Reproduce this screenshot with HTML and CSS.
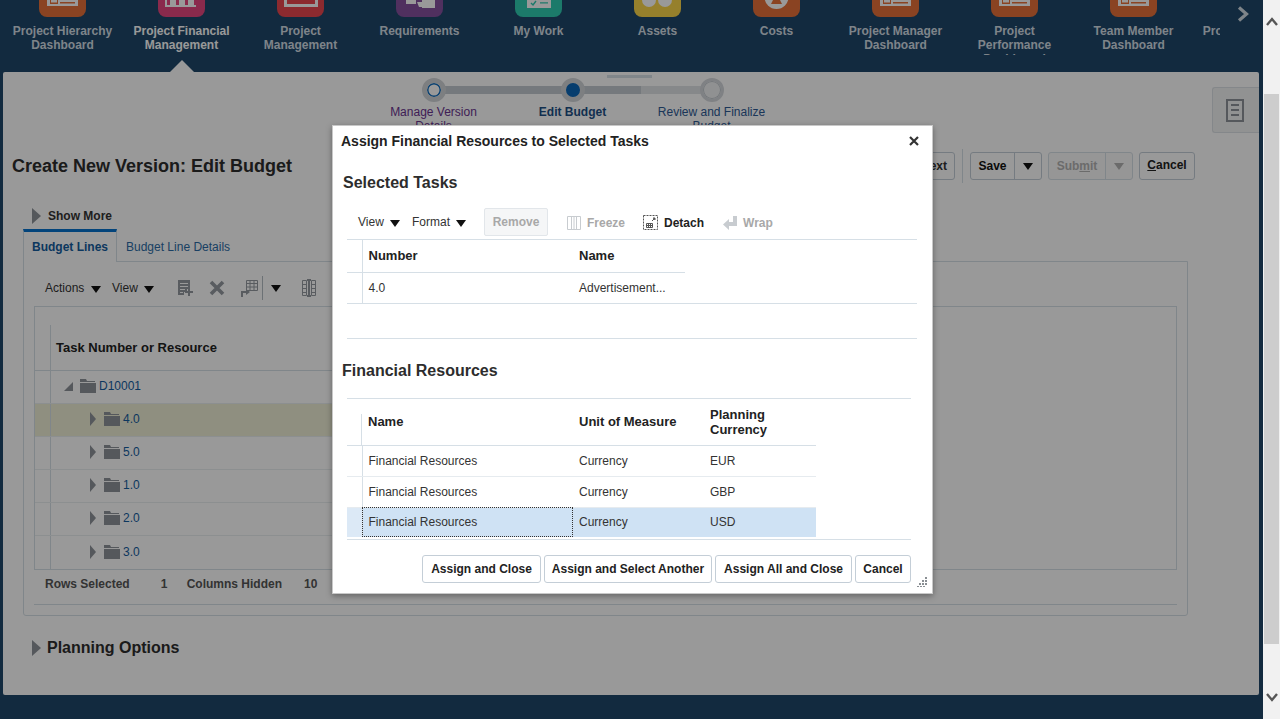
FILE: index.html
```html
<!DOCTYPE html>
<html lang="en">
<head>
    <meta charset="UTF-8">
    <title>Create New Version: Edit Budget</title>
    <link rel="stylesheet" href="styles.css">
</head>
<body>
    <svg class="defs" width="0" height="0">
        <symbol id="folder" viewBox="0 0 16 14">
            <path d="M0 2V0h6l1 2h8v1H0zM0 4h16v10H0z"/>
        </symbol>
        <symbol id="card" viewBox="0 0 47 17">
            <path fill="#fff" d="M8 0h31v6H8z"/>
            <path fill="#e67139" d="M11 0h8v4h-8zM21 2h15v1.5H21z"/>
            <path fill="#fff" d="M12 0h6v2.5h-6z"/>
        </symbol>
    </svg>

    <div class="viewport">
        <header class="app-header">
            <nav class="strip">
                <a class="strip-item">
                    <svg class="tile orange" viewBox="0 0 47 17"><use href="#card"/></svg>
                    <span class="strip-label">Project Hierarchy Dashboard</span>
                </a>
                <a class="strip-item active">
                    <svg class="tile crimson" viewBox="0 0 47 17"><path fill="#fff" d="M7 0h2v5h3V0h6v5h3V0h6v5h3V0h6v5h2v2H7z"/></svg>
                    <span class="strip-label">Project Financial Management</span>
                </a>
                <a class="strip-item">
                    <svg class="tile red" viewBox="0 0 47 17"><path fill="#fff" d="M7 0h34v7H7z"/><path fill="#e9464f" d="M10 0h28v4H10z"/></svg>
                    <span class="strip-label">Project Management</span>
                </a>
                <a class="strip-item">
                    <svg class="tile purple" viewBox="0 0 47 17"><path fill="#fff" d="M10 0h10v4H10zM26 0h13v8H26zM21 2h5v5h-3z"/></svg>
                    <span class="strip-label">Requirements</span>
                </a>
                <a class="strip-item">
                    <svg class="tile teal" viewBox="0 0 47 17">
                        <path fill="#fff" d="M12 0h24v8H12z"/>
                        <path fill="none" stroke="#30cbb1" stroke-width="1.4" d="M16 3l2 2 3-4"/>
                        <path fill="#30cbb1" d="M25 2.2h8v1.4h-8z"/>
                    </svg>
                    <span class="strip-label">My Work</span>
                </a>
                <a class="strip-item">
                    <svg class="tile yellow" viewBox="0 0 47 17"><circle fill="#fff" cx="15" cy="0" r="7"/><circle fill="#fff" cx="31" cy="0" r="7"/></svg>
                    <span class="strip-label">Assets</span>
                </a>
                <a class="strip-item">
                    <svg class="tile orange" viewBox="0 0 47 17"><circle fill="#fff" cx="23.5" cy="-3" r="12"/><path fill="#e67139" d="M20 0h7l2 4h-11z"/></svg>
                    <span class="strip-label">Costs</span>
                </a>
                <a class="strip-item">
                    <svg class="tile orange" viewBox="0 0 47 17"><use href="#card"/></svg>
                    <span class="strip-label">Project Manager Dashboard</span>
                </a>
                <a class="strip-item">
                    <svg class="tile orange" viewBox="0 0 47 17"><use href="#card"/></svg>
                    <span class="strip-label">Project Performance Dashboard</span>
                </a>
                <a class="strip-item">
                    <svg class="tile orange" viewBox="0 0 47 17"><use href="#card"/></svg>
                    <span class="strip-label">Team Member Dashboard</span>
                </a>
                <a class="strip-item">
                    <svg class="tile orange" viewBox="0 0 47 17"><use href="#card"/></svg>
                    <span class="strip-label">Project Hierarchy</span>
                </a>
            </nav>
            <svg class="strip-next" width="14" height="16" viewBox="0 0 14 16"><path d="M2 1.5L9.5 8 2 14.5" fill="none" stroke="#d3dde5" stroke-width="3.2"/></svg>
        </header>

        <main class="panel">
            <div class="splitter"></div>

            <div class="train">
                <div class="train-line"></div>
                <div class="stop visited">
                    <span class="stop-dot"></span>
                    <span class="stop-label">Manage Version Details</span>
                </div>
                <div class="stop current">
                    <span class="stop-dot"></span>
                    <span class="stop-label">Edit Budget</span>
                </div>
                <div class="stop">
                    <span class="stop-dot"></span>
                    <span class="stop-label">Review and Finalize Budget</span>
                </div>
            </div>

            <div class="side-tab">
                <svg width="18" height="23" viewBox="0 0 18 23"><path fill="none" stroke="#8e9399" stroke-width="2" d="M1 1h16v21H1zM5 6h8M5 11h8M5 16h8"/></svg>
            </div>

            <div class="title-row">
                <h1 class="page-title">Create New Version: Edit Budget</h1>
                <div class="page-actions">
                    <button class="btn">Next</button>
                    <span class="actions-sep"></span>
                    <div class="split-btn">
                        <span class="split-main">Save</span>
                        <span class="split-drop"><i class="caret black"></i></span>
                    </div>
                    <div class="split-btn disabled">
                        <span class="split-main">Sub<u>m</u>it</span>
                        <span class="split-drop"><i class="caret grey"></i></span>
                    </div>
                    <button class="btn cancel"><u>C</u>ancel</button>
                </div>
            </div>

            <div class="show-more">
                <i class="disclose"></i>
                <span>Show More</span>
            </div>

            <div class="tabs">
                <span class="tab selected">Budget Lines</span>
                <span class="tab">Budget Line Details</span>
            </div>

            <section class="tab-box">
                <div class="grid-toolbar">
                    <span class="menu actions">Actions <i class="caret black"></i></span>
                    <span class="menu">View <i class="caret black"></i></span>
                    <svg class="tool first" width="15" height="16" viewBox="0 0 15 16">
                        <path fill="#949aa0" d="M0 0h12v9H9v3H6v3H0z"/>
                        <path stroke="#fff" d="M2 3.5h8M2 6.5h8M2 9.5h5M2 12.5h3"/>
                        <path fill="#949aa0" d="M10 8h2v3h3v2h-3v3h-2v-3H7v-2h3z"/>
                    </svg>
                    <svg class="tool" width="16" height="16" viewBox="0 0 16 16"><path stroke="#949aa0" stroke-width="3.6" d="M2 2l12 12M14 2L2 14"/></svg>
                    <svg class="tool" width="17" height="17" viewBox="0 0 17 17">
                        <path fill="none" stroke="#949aa0" d="M5.5.5h11v10h-11zM5.5 3.5h11M5.5 7h11M9 .5v10M13 .5v10"/>
                        <path fill="none" stroke="#949aa0" stroke-width="2" d="M1 17v-5h5"/>
                        <path fill="#949aa0" d="M5 9l4 3-4 3z"/>
                    </svg>
                    <span class="tool-sep"></span>
                    <i class="caret black tool-caret"></i>
                    <svg class="tool last" width="16" height="18" viewBox="0 0 16 18">
                        <path fill="none" stroke="#949aa0" d="M1.500 1.500h4v15h-4zM10.500 1.500h4v15h-4zM1.500 5.500h4M1.500 9.500h4M1.500 13.500h4M10.500 5.500h4M10.500 9.500h4M10.500 13.500h4"/>
                        <path fill="#949aa0" d="M6 0h4v2H9v14h1v2H6v-2h1V2H6z"/>
                    </svg>
                </div>

                <div class="tree">
                    <div class="tree-head">
                        <span class="tree-sel"></span>
                        <span class="tree-col">Task Number or Resource</span>
                    </div>
                    <div class="tree-row">
                        <span class="tree-sel"></span>
                        <i class="twist open"></i>
                        <svg class="folder" width="16" height="14"><use href="#folder"/></svg>
                        <a class="node">D10001</a>
                    </div>
                    <div class="tree-row child hilite">
                        <span class="tree-sel"></span>
                        <i class="twist"></i>
                        <svg class="folder" width="16" height="14"><use href="#folder"/></svg>
                        <a class="node">4.0</a>
                    </div>
                    <div class="tree-row child">
                        <span class="tree-sel"></span>
                        <i class="twist"></i>
                        <svg class="folder" width="16" height="14"><use href="#folder"/></svg>
                        <a class="node">5.0</a>
                    </div>
                    <div class="tree-row child">
                        <span class="tree-sel"></span>
                        <i class="twist"></i>
                        <svg class="folder" width="16" height="14"><use href="#folder"/></svg>
                        <a class="node">1.0</a>
                    </div>
                    <div class="tree-row child">
                        <span class="tree-sel"></span>
                        <i class="twist"></i>
                        <svg class="folder" width="16" height="14"><use href="#folder"/></svg>
                        <a class="node">2.0</a>
                    </div>
                    <div class="tree-row child last-row">
                        <span class="tree-sel"></span>
                        <i class="twist"></i>
                        <svg class="folder" width="16" height="14"><use href="#folder"/></svg>
                        <a class="node">3.0</a>
                    </div>
                </div>

                <div class="status-bar">
                    <b class="status-name">Rows Selected</b>
                    <b class="status-num">1</b>
                    <b class="status-name">Columns Hidden</b>
                    <b class="status-num wide">10</b>
                </div>
                <div class="status-rule"></div>
            </section>

            <div class="planning">
                <i class="disclose"></i>
                <span>Planning Options</span>
            </div>
        </main>

        <div class="overlay"></div>

        <div class="modal">
            <div class="modal-head">
                <span class="modal-title">Assign Financial Resources to Selected Tasks</span>
                <svg width="10" height="10" viewBox="0 0 10 10"><path stroke="#333" stroke-width="2.200" d="M1 1l8 8M9 1L1 9"/></svg>
            </div>

            <h2 class="section-title">Selected Tasks</h2>
            <div class="modal-toolbar">
                <span class="menu view">View <i class="caret black"></i></span>
                <span class="menu format">Format <i class="caret black"></i></span>
                <button class="btn-remove" disabled>Remove</button>
                <span class="tool-text off">
                    <svg width="14" height="14" viewBox="0 0 14 14"><path fill="none" stroke="#c8ccd0" d="M.5.5h13v13H.5zM4.500.5v13M7 .5v13M9.500.5v13"/></svg>
                    Freeze
                </span>
                <span class="tool-text">
                    <svg width="15" height="15" viewBox="0 0 15 15">
                        <path fill="none" stroke="#555" stroke-dasharray="2 1" d="M.5.5h14v14H.5z"/>
                        <path fill="none" stroke="#555" d="M3.500 8.500h6v4h-6zM5.500 8.500v4M7.500 8.500v4M3.500 10.500h6"/>
                        <path stroke="#555" d="M9 6l3-3M10 3h2v2"/>
                    </svg>
                    Detach
                </span>
                <span class="tool-text off wrap">
                    <svg width="14" height="14" viewBox="0 0 14 14"><path fill="#c8ccd0" d="M10 0h4v10H6v4L0 8.500 6 3v3h4z"/></svg>
                    Wrap
                </span>
            </div>

            <div class="task-wrap">
                <table class="data">
                    <tr>
                        <th class="sel"></th>
                        <th class="col-a">Number</th>
                        <th class="col-n">Name</th>
                    </tr>
                    <tr>
                        <td class="sel"></td>
                        <td>4.0</td>
                        <td>Advertisement...</td>
                    </tr>
                </table>
            </div>
            <div class="modal-rule"></div>

            <h2 class="section-title fin">Financial Resources</h2>
            <div class="fin-wrap">
                <table class="data">
                    <tr class="tall">
                        <th class="sel short"></th>
                        <th class="col-a">Name</th>
                        <th class="col-u">Unit of Measure</th>
                        <th class="col-n">Planning Currency</th>
                    </tr>
                    <tr>
                        <td class="sel"></td>
                        <td>Financial Resources</td>
                        <td>Currency</td>
                        <td>EUR</td>
                    </tr>
                    <tr>
                        <td class="sel"></td>
                        <td>Financial Resources</td>
                        <td>Currency</td>
                        <td>GBP</td>
                    </tr>
                    <tr class="picked">
                        <td class="sel"></td>
                        <td class="focus">Financial Resources</td>
                        <td>Currency</td>
                        <td>USD</td>
                    </tr>
                </table>
            </div>

            <div class="modal-foot">
                <button class="btn">Assign and Close</button>
                <button class="btn">Assign and Select Another</button>
                <button class="btn">Assign All and Close</button>
                <button class="btn">Cancel</button>
            </div>

            <svg class="grip" width="10" height="10" viewBox="0 0 10 10">
                <path fill="#8a8f94" d="M8 0h2v2H8zM5 3h2v2H5zM8 3h2v2H8zM2 6h2v2H2zM5 6h2v2H5zM8 6h2v2H8zM0 9h2v1H0zM3 9h2v1H3zM6 9h2v1H6z"/>
            </svg>
        </div>
    </div>

    <aside class="scrollbar">
        <svg class="scroll-up" width="12" height="9" viewBox="0 0 12 9"><path d="M1 8l5-6 5 6" fill="none" stroke="#555" stroke-width="2.400"/></svg>
        <div class="scroll-thumb"></div>
        <svg class="scroll-down" width="12" height="9" viewBox="0 0 12 9"><path d="M1 1l5 6 5-6" fill="none" stroke="#555" stroke-width="2.400"/></svg>
    </aside>
</body>
</html>
```

FILE: styles.css
```css
html {
    background-color: white;
}

body {
    display: flex;
    margin: 0;
    height: 719px;
    overflow: hidden;
    font-family: "Liberation Sans", Arial, sans-serif;
    font-size: 12px;
    color: #333;
}

.defs {
    position: absolute;
}

.viewport {
    position: relative;
    width: 1263px;
    background-color: #1e4769;
    overflow: hidden;
}

.overlay {
    position: absolute;
    inset: 0;
    background-color: rgba(0, 0, 0, 0.4);
}

/* top strip */
.app-header {
    display: flex;
    height: 72px;
    padding-left: 3px;
}

.strip {
    display: flex;
    width: 1217px;
    overflow: hidden;
    flex-shrink: 0;
}

.strip-item {
    position: relative;
    display: flex;
    flex-direction: column;
    align-items: center;
    flex: 0 0 119px;
    height: 72px;
}

.tile {
    display: block;
    width: 47px;
    height: 17px;
    flex-shrink: 0;
    border-radius: 0 0 8px 8px;
}

.orange { background-color: #e67139; }
.crimson { background-color: #e6467f; }
.red { background-color: #e9464f; }
.purple { background-color: #85509e; }
.teal { background-color: #30cbb1; }
.yellow { background-color: #fad54a; }

.strip-label {
    display: block;
    margin-top: 7px;
    padding: 0 8px;
    max-height: 31px;
    overflow: hidden;
    font-weight: bold;
    line-height: 14px;
    text-align: center;
    color: #d3dde5;
}

.strip-item.active .strip-label {
    color: white;
}

.strip-item.active::after {
    content: "";
    position: absolute;
    bottom: 0;
    left: 48px;
    border-left: 12px solid transparent;
    border-right: 12px solid transparent;
    border-bottom: 12px solid white;
}

.strip-next {
    margin: 6px 0 0 17px;
}

/* page panel */
.panel {
    position: relative;
    box-sizing: border-box;
    width: 1256px;
    height: 623px;
    margin-left: 3px;
    background-color: white;
    border-radius: 2px;
    overflow: hidden;
}

.splitter {
    width: 45px;
    height: 3px;
    margin: 3px 0 0 604px;
    background-color: #d6dfe6;
}

.train {
    position: relative;
    display: flex;
    width: 417px;
    height: 73px;
    margin-left: 361px;
}

.train-line {
    position: absolute;
    top: 8px;
    left: 69px;
    width: 278px;
    height: 8px;
    background: linear-gradient(to right, #c3cad0 75%, #dfe3e7 75%);
}

.stop {
    position: relative;
    display: flex;
    flex-direction: column;
    align-items: center;
    width: 139px;
    text-align: center;
}

.stop-dot {
    box-sizing: border-box;
    width: 24px;
    height: 24px;
    border: 3px solid #d4d8dc;
    border-radius: 50%;
    background-color: #f0f2f4;
    box-shadow: inset 0 0 0 1px #c0c6cc;
}

.visited .stop-dot {
    border: 5px solid #d0d4d8;
    background-color: white;
    box-shadow: inset 0 0 0 1.5px #0f6cbd;
}

.current .stop-dot {
    border: 5px solid #d0d4d8;
    background-color: #0a66b8;
    box-shadow: none;
}

.stop-label {
    width: 114px;
    margin-top: 3px;
    line-height: 14px;
    color: #2d5a94;
}

.visited .stop-label {
    color: #6a3490;
}

.current .stop-label {
    font-weight: bold;
    color: #1d4f85;
}

.side-tab {
    position: absolute;
    top: 15px;
    right: 0;
    display: flex;
    align-items: center;
    justify-content: center;
    box-sizing: border-box;
    width: 47px;
    height: 46px;
    padding-right: 2px;
    background-color: #f2f3f4;
    border: 1px solid #dde2e6;
    border-right: none;
    border-radius: 3px 0 0 3px;
}

.title-row {
    display: flex;
    justify-content: space-between;
    align-items: center;
    height: 30px;
    padding: 0 64px 0 9px;
}

.page-title {
    margin: 0;
    font-size: 18px;
    color: #2d2d2d;
}

.page-actions {
    display: flex;
    align-items: center;
    gap: 6px;
}

.actions-sep {
    width: 1px;
    height: 34px;
    margin: 0 1px;
    background-color: #d6dfe6;
}

.btn {
    box-sizing: border-box;
    height: 28px;
    padding: 0 7px;
    background-color: white;
    border: 1px solid #c4ced7;
    border-radius: 3px;
    font: bold 12px "Liberation Sans", Arial, sans-serif;
    color: #333;
}

.btn.cancel {
    width: 56px;
    padding-bottom: 3px;
    color: #222;
}

.split-btn {
    display: flex;
    box-sizing: border-box;
    height: 28px;
    line-height: 26px;
    background-color: white;
    border: 1px solid #c4ced7;
    border-radius: 3px;
    font-weight: bold;
    color: #111;
}

.split-main {
    box-sizing: border-box;
    width: 44px;
    text-align: center;
    border-right: 1px solid #c4ced7;
}

.split-drop {
    display: flex;
    align-items: center;
    justify-content: center;
    width: 26px;
}

.split-btn.disabled {
    color: #b3b3b3;
    background-color: #fafafa;
    border-color: #d6dfe6;
}

.split-btn.disabled .split-main {
    width: 57px;
    border-color: #d6dfe6;
}

.caret {
    display: inline-block;
    border-left: 5px solid transparent;
    border-right: 5px solid transparent;
    border-top: 7px solid #222;
    vertical-align: -1px;
}

.caret.black {
    border-top-color: #111;
}

.caret.grey {
    border-top-color: #b3b3b3;
}

.show-more {
    display: flex;
    align-items: center;
    gap: 7px;
    height: 16px;
    margin: 27px 0 0 29px;
    font-weight: bold;
    color: #333;
}

.disclose {
    width: 0;
    height: 0;
    border-top: 8px solid transparent;
    border-bottom: 8px solid transparent;
    border-left: 9px solid #8e9399;
}

.tabs {
    display: flex;
    margin: 5px 0 0 20px;
    height: 33px;
}

.tab {
    position: relative;
    box-sizing: border-box;
    padding: 11px 9px 0 9px;
    height: 33px;
    color: #2c6ca6;
    white-space: nowrap;
}

.tab.selected {
    width: 94px;
    height: 33px;
    padding: 8px 0 0 8px;
    border-top: 3px solid #0572ce;
    border-left: 1px solid #d6dfe6;
    border-right: 1px solid #d6dfe6;
    background-color: white;
    font-weight: bold;
    color: #145c9e;
}

.tab-box {
    box-sizing: border-box;
    width: 1165px;
    height: 355px;
    margin: -1px 0 0 20px;
    padding: 0 10px;
    border: 1px solid #d6dfe6;
    border-radius: 0 0 3px 3px;
}

.grid-toolbar {
    display: flex;
    align-items: center;
    box-sizing: border-box;
    height: 44px;
    padding-top: 8px;
}

.menu {
    color: #333;
}

.menu .caret {
    margin-left: 3px;
}

.menu.actions {
    margin-left: 11px;
    width: 67px;
}

.tool {
    flex-shrink: 0;
    margin-right: 16px;
}

.tool.first {
    margin-left: 24px;
}

.tool-sep {
    width: 1px;
    height: 24px;
    margin-left: -12px;
    background-color: #b4bcc3;
}

.tool-caret {
    margin: 0 20px 0 8px;
}

.tree {
    box-sizing: border-box;
    height: 264px;
    border: 1px solid #d6dfe6;
}

.tree-head {
    display: flex;
    align-items: center;
    width: 880px;
    height: 64px;
    border-bottom: 1px solid #d6dfe6;
    box-sizing: border-box;
    font-size: 13px;
    font-weight: bold;
    color: #222;
}

.tree-head .tree-sel {
    height: 45px;
    align-self: flex-end;
}

.tree-col {
    margin: 17px 0 0 5px;
}

.tree-sel {
    align-self: stretch;
    box-sizing: border-box;
    width: 16px;
    border-right: 1px solid #d6dfe6;
}

.tree-row {
    display: flex;
    align-items: center;
    box-sizing: border-box;
    width: 880px;
    height: 33px;
    padding-bottom: 2px;
    border-bottom: 1px solid #eaeef1;
}

.tree-row .tree-sel {
    margin-bottom: -2px;
}

.tree-row.last-row {
    border-bottom: none;
}

.tree-row.hilite {
    background-color: #eeeed5;
}

.twist {
    width: 0;
    height: 0;
    margin-left: 13px;
    border-right: 9px solid #8e9399;
    border-top: 9px solid transparent;
}

.twist.open {
    margin-right: 7px;
}

.child .twist {
    margin: 0 8px 0 39px;
    border-right: none;
    border-top: 7px solid transparent;
    border-bottom: 7px solid transparent;
    border-left: 6px solid #8e9399;
}

.folder {
    fill: #8e9399;
}

.node {
    margin-left: 3px;
    color: #145c9e;
}

.status-bar {
    display: flex;
    align-items: center;
    height: 28px;
    padding-left: 11px;
    color: #555;
}

.status-num {
    box-sizing: content-box;
    width: 26px;
    padding-left: 31px;
}

.status-num.wide {
    margin-left: -9px;
}

.status-bar b {
    white-space: nowrap;
}

.status-rule {
    height: 1px;
    margin-top: 6px;
    background-color: #d6dfe6;
}

.planning {
    display: flex;
    align-items: center;
    gap: 6px;
    margin: 24px 0 0 29px;
    height: 16px;
    font-size: 16px;
    font-weight: bold;
    color: #2d2d2d;
}

/* dialog */
.modal {
    position: absolute;
    top: 125px;
    left: 332px;
    box-sizing: border-box;
    width: 601px;
    height: 469px;
    background-color: white;
    border: 1px solid #c8c8c8;
    box-shadow: 0 2px 6px rgba(0, 0, 0, 0.35);
}

.modal-head {
    display: flex;
    justify-content: space-between;
    align-items: center;
    height: 30px;
    padding: 0 13px 0 8px;
}

.modal-title {
    font-size: 14px;
    font-weight: bold;
    color: #222;
}

.section-title {
    height: 20px;
    margin: 17px 0 0 10px;
    font-size: 16px;
    line-height: 20px;
    color: #2d2d2d;
}

.section-title.fin {
    margin: 22px 0 0 9px;
}

.modal-toolbar {
    display: flex;
    align-items: center;
    height: 28px;
    margin: 15px 0 3px 25px;
}

.menu.view {
    width: 54px;
}

.menu.format {
    width: 72px;
}

.btn-remove {
    box-sizing: border-box;
    width: 64px;
    height: 28px;
    background-color: #f5f6f7;
    border: 1px solid #e2e6ea;
    border-radius: 2px;
    font: bold 12px "Liberation Sans", Arial, sans-serif;
    color: #a8a8a8;
}

.tool-text {
    display: flex;
    align-items: center;
    gap: 6px;
    margin-left: 18px;
    padding-top: 1px;
    font-weight: bold;
    color: #222;
}

.tool-text.off {
    color: #a8a8a8;
}

.tool-text.wrap {
    margin-left: 19px;
}

.btn-remove + .tool-text {
    margin-left: 19px;
}

.task-wrap {
    box-sizing: border-box;
    width: 570px;
    height: 65px;
    margin-left: 14px;
    border-top: 1px solid #d6dfe6;
    border-bottom: 1px solid #d6dfe6;
}

.modal-rule {
    width: 570px;
    height: 1px;
    margin: 34px 0 0 14px;
    background-color: #d6dfe6;
}

.fin-wrap {
    box-sizing: border-box;
    width: 564px;
    height: 142px;
    margin: 17px 0 0 14px;
    border-top: 1px solid #d6dfe6;
    border-bottom: 1px solid #d6dfe6;
}

.data {
    border-collapse: collapse;
    table-layout: fixed;
}

.data th,
.data td {
    box-sizing: border-box;
    height: 31px;
    padding: 0 6px;
    text-align: left;
    vertical-align: middle;
    border-bottom: 1px solid #e6ebef;
    overflow: hidden;
    white-space: nowrap;
}

.data th {
    height: 32px;
    font-size: 13px;
    line-height: 15px;
    color: #222;
    white-space: normal;
    border-bottom-color: #d6dfe6;
}

.data tr:last-child td {
    border-bottom: none;
}

.data tr.tall th {
    height: 46px;
}

.data .sel {
    width: 15px;
    padding: 0;
    border-right: 1px solid #d6dfe6;
}

.data th.sel.short {
    border-right: none;
    background: linear-gradient(#d6dfe6, #d6dfe6) right bottom / 1px 31px no-repeat;
}

.data .col-a {
    width: 211px;
}

.data .col-u {
    width: 131px;
}

.data .col-n {
    width: 112px;
}

.picked td {
    height: 30px;
    background-color: #cfe2f4;
}

.picked td.sel {
    background-color: #dce9f6;
}

.picked td.focus {
    outline: 1px dotted #333;
    outline-offset: -1px;
}

.modal-foot {
    display: flex;
    justify-content: flex-end;
    gap: 3px;
    width: 578px;
    margin-top: 15px;
}

.modal-foot .btn {
    padding: 0 8px;
    color: #222;
}

.modal-foot .btn:nth-child(2) {
    padding: 0 7px;
}

.modal-foot .btn:last-child {
    width: 56px;
    padding: 0;
}

.grip {
    position: absolute;
    right: 5px;
    bottom: 6px;
}

/* page scrollbar */
.scrollbar {
    display: flex;
    flex-direction: column;
    align-items: center;
    width: 17px;
    background-color: #f1f1f1;
}

.scroll-up {
    margin-top: 17px;
    flex-shrink: 0;
}

.scroll-thumb {
    width: 15px;
    height: 550px;
    margin-top: 68px;
    flex-shrink: 0;
    background-color: #cdcdcd;
}

.scroll-down {
    margin-top: 49px;
    flex-shrink: 0;
}
```
